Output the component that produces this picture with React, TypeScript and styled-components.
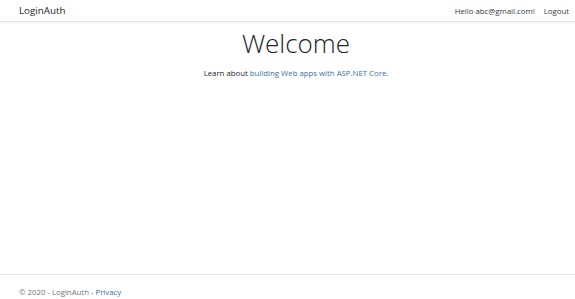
import styled, { createGlobalStyle } from 'styled-components';

const GlobalStyle = createGlobalStyle`
  html, body {
    margin: 0;
    padding: 0;
    height: 100%;
  }
  body {
    font-family: "Open Sans", "Noto Sans", sans-serif;
    color: #212529;
    background: #fff;
  }
  #root {
    height: 100%;
  }
`;

const Page = styled.div`
  height: 299px;
  display: flex;
  flex-direction: column;
  overflow: hidden;
`;

const Navbar = styled.header`
  height: 21px;
  flex-shrink: 0;
  display: flex;
  align-items: center;
  justify-content: space-between;
  padding: 0 6px 0 19px;
  border-bottom: 1px solid #e5e5e5;
  box-shadow: 0 1px 3px rgba(0, 0, 0, 0.05);
`;

const Brand = styled.a`
  font-size: 9.8px;
  color: #212529;
  text-decoration: none;
`;

const NavLinks = styled.nav`
  display: flex;
  align-items: center;
  gap: 9px;
`;

const NavItem = styled.a`
  font-size: 7.8px;
  color: #343a40;
  text-decoration: none;
`;

const Main = styled.main`
  flex: 1;
  display: flex;
  flex-direction: column;
  align-items: center;
  padding: 6px 0 0 17px;
`;

const Title = styled.h1`
  margin: 0;
  font-size: 26px;
  font-weight: 300;
  line-height: 1.2;
  color: #212529;
`;

const Lead = styled.p`
  margin: 9px 0 0;
  font-size: 7.8px;
`;

const Link = styled.a`
  color: #3a6ea8;
  text-decoration: none;
`;

const Footer = styled.footer`
  box-sizing: border-box;
  height: 25px;
  flex-shrink: 0;
  border-top: 1px solid #e5e5e5;
  padding: 12px 19px 0;
  display: flex;
  align-items: flex-start;
  font-size: 7.8px;
  line-height: 11px;
  color: #6c757d;
`;

export default function App() {
  return (
    <Page>
      <GlobalStyle />
      <Navbar>
        <Brand href="#">LoginAuth</Brand>
        <NavLinks>
          <NavItem href="#">Hello abc@gmail.com!</NavItem>
          <NavItem href="#">Logout</NavItem>
        </NavLinks>
      </Navbar>
      <Main>
        <Title>Welcome</Title>
        <Lead>
          Learn about <Link href="#">building Web apps with ASP.NET Core</Link>.
        </Lead>
      </Main>
      <Footer>
        © 2020 - LoginAuth -&nbsp;<Link href="#">Privacy</Link>
      </Footer>
    </Page>
  );
}
